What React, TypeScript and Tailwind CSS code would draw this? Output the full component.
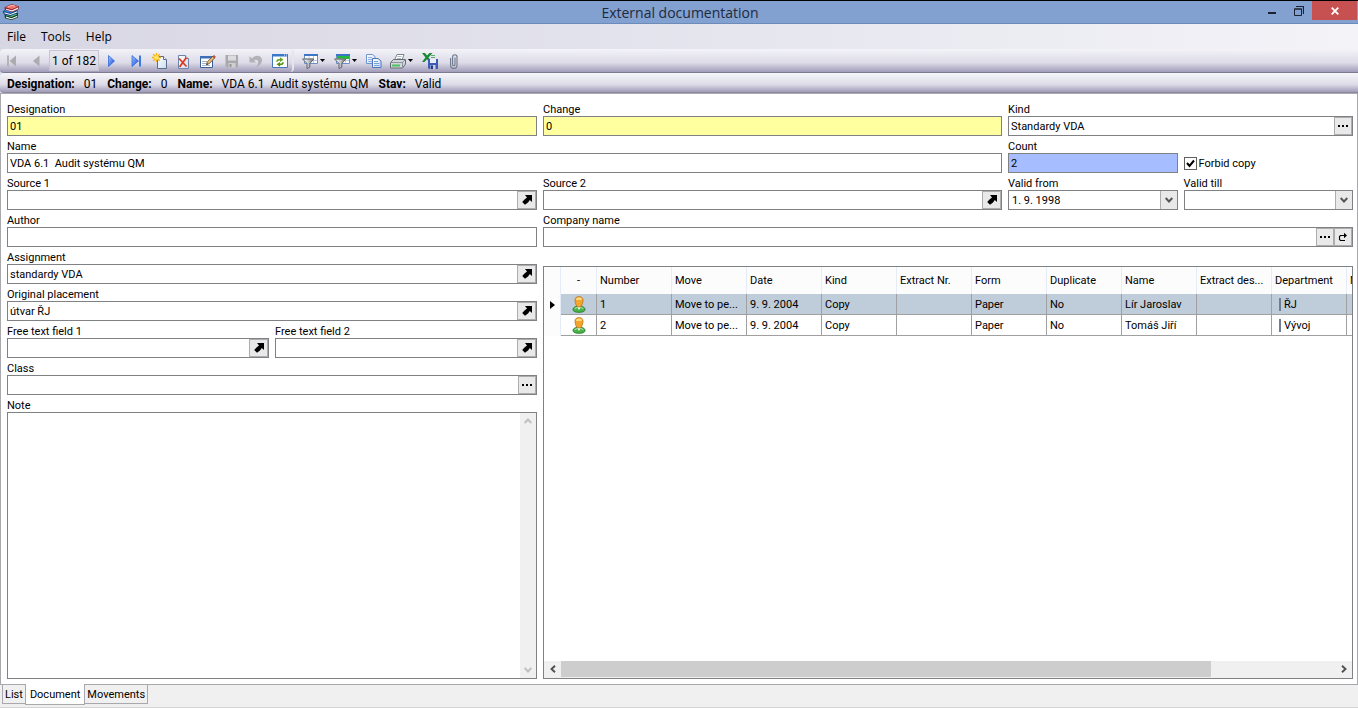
import { useState, type ReactNode } from "react";
import clsx from "clsx";

const BooksIcon = () => (
  <svg viewBox="0 0 18 18" className="h-[18px] w-[18px]">
    <path d="M2.500 12.500L5 10.500l11-.500v4.500L9.500 17l-6.500-1.800z" fill="#173a26" />
    <path d="M4 13.500l5.500 1.800 5.800-2.600v1.200l-5.800 2.400L4 14.800z" fill="#f4fbf5" />
    <path d="M3.500 12.300l6 1.700 6-2.800-4-1.200z" fill="#4fc07a" />
    <path d="M.8 8.500L3 6.500l12.500-.500v4L8.500 13 2 11.500z" fill="#123a78" />
    <path d="M2.500 9.300l6 1.700 6.500-2.700v1.200L8.500 12l-6-1.500z" fill="#eef6ff" />
    <path d="M1.500 8.300l2-1.500 11.500.4L8.500 10z" fill="#2f86dd" />
    <path d="M2.500 4.200L9.500 1l7.200 2.200v3L10 9 3 7z" fill="#8d2226" />
    <path d="M4 5.700l6 1.600 6-2.700v1.300l-6 2.500-6-1.700z" fill="#fff1f0" />
    <path d="M3.200 4.300l6.300-2.700 6.600 1.900L10 6.200z" fill="#f0706c" />
    <path d="M6 4l4-1.600 3 .8" fill="none" stroke="#ffb9b4" />
  </svg>
);

const Icon = ({ children }: { children: ReactNode }) => (
  <svg viewBox="0 0 16 16" className="h-4 w-4 shrink-0">
    <defs>
      <linearGradient id="navBlue" x1="0" y1="0" x2="1" y2="1">
        <stop offset="0" stopColor="#a4c6ff" />
        <stop offset="1" stopColor="#0b49d8" />
      </linearGradient>
      <linearGradient id="steel" x1="0" y1="0" x2="1" y2="0">
        <stop offset="0" stopColor="#ffffff" />
        <stop offset=".5" stopColor="#c9cccf" />
        <stop offset="1" stopColor="#4f555c" />
      </linearGradient>
      <linearGradient id="page" x1="0" y1="0" x2="1" y2="1">
        <stop offset="0" stopColor="#ffffff" />
        <stop offset="1" stopColor="#c9dcf2" />
      </linearGradient>
    </defs>
    {children}
  </svg>
);

const FirstIcon = () => (
  <Icon>
    <path d="M3 2.500h2v11H3z" fill="#b4b4b8" />
    <path d="M12 2.500v11L5.500 8z" fill="#acacb0" />
  </Icon>
);

const PrevIcon = () => (
  <Icon>
    <path d="M11.500 2.500v11L5 8z" fill="#acacb0" />
  </Icon>
);

const NextIcon = () => (
  <Icon>
    <path d="M4.500 2.500v11L10.500 8z" fill="url(#navBlue)" stroke="#2460d8" strokeWidth=".7" />
  </Icon>
);

const LastIcon = () => (
  <Icon>
    <path d="M4 2.500v11L10.500 8z" fill="url(#navBlue)" stroke="#2460d8" strokeWidth=".7" />
    <path d="M11 2.500h2v11h-2z" fill="#3f78e2" />
  </Icon>
);

const NewIcon = () => (
  <Icon>
    <path d="M5.500 3.500h6l3 3v9h-9z" fill="url(#page)" stroke="#5b6b88" />
    <path d="M11.500 3.500v3h3" fill="#fff" stroke="#5b6b88" />
    <path d="M4.500 0v9M0 4.500h9M1.300 1.300l6.400 6.400M7.700 1.300L1.300 7.700" stroke="#f5ae10" strokeWidth="1.300" />
    <circle cx="4.500" cy="4.500" r="2.300" fill="#ffe45c" />
  </Icon>
);

const DeleteIcon = () => (
  <Icon>
    <path d="M2.500 2.500h7l3 3v10h-10z" fill="url(#page)" stroke="#6f84a8" />
    <path d="M9.500 2.500v3h3" fill="#fff" stroke="#6f84a8" />
    <path d="M3 5.500l7.500 8M10.500 4.500L3.500 14" stroke="#e0391c" strokeWidth="1.800" />
  </Icon>
);

const EditIcon = () => (
  <Icon>
    <path d="M.5 3.500h12v11H.5z" fill="#fff" stroke="#3a5f95" />
    <path d="M0 3h13v2.500H0z" fill="#3d6fb8" />
    <path d="M2 8.500h5M2 10.500h4M2 12.500h8" stroke="#a3b4cc" />
    <path d="M6.500 11.500l.8-2.700L13 3l2 1.700-5.800 6z" fill="#e2b878" stroke="#5d3d1c" strokeWidth=".7" />
    <path d="M12.300 3.600L14 2l1.800 1.700-1.700 1.700z" fill="#b9503e" />
    <path d="M6.300 12l.6-1.800 1.400 1.100z" fill="#222" />
  </Icon>
);

const SaveIcon = () => (
  <Icon>
    <path d="M1.500 2h12.500v12.500H3L1.500 13z" fill="#a9a9ac" />
    <path d="M4 2.500h8v5H4z" fill="#dcdcde" />
    <path d="M4.500 10h7v4.500h-7z" fill="#d0d0d3" />
    <path d="M5.500 11h2v3h-2z" fill="#97979a" />
  </Icon>
);

const UndoIcon = () => (
  <Icon>
    <path d="M1.500 3v6.500H8L6 7.400c2-1.500 4.200-.7 4.200 1.500 0 2.100-1 3.600-2.700 5.600 4-1.500 6.500-4.200 6.500-7.500C14 2.800 8.200.8 4 5.400z" fill="#b2b2b6" />
  </Icon>
);

const RefreshIcon = () => (
  <Icon>
    <path d="M.5 1.500h15v13H.5z" fill="#fff" stroke="#4577bd" />
    <path d="M0 1h16v2.500H0z" fill="#3b78cc" />
    <path d="M12 1.500h1v1h-1zM14 1.500h1v1h-1z" fill="#dce9fa" />
    <path d="M5 8.700C5 7 6.200 6.400 8.500 6.600" stroke="#6aa51f" strokeWidth="1.700" fill="none" />
    <path d="M8 4.300l3.500 2.500L8 9z" fill="#6aa51f" />
    <path d="M11 9.300c0 1.700-1.200 2.300-3.500 2.100" stroke="#558f16" strokeWidth="1.700" fill="none" />
    <path d="M8 9L4.500 11.300 8 13.700z" fill="#558f16" />
  </Icon>
);

const FilterIcon = ({ green = false }: { green?: boolean }) => (
  <Icon>
    <path d="M2.500 1.500h13v9h-13z" fill="#fff" stroke="#6a8fc6" />
    <path d="M7 3v7M11.500 3v7M3 7.500h12" stroke="#b9cbe6" />
    <path d="M2 1h14v2H2z" fill="#3f76c4" />
    {green && <path d="M3 3h12v3H3z" fill="#22b83e" />}
    <path d="M.5 6h11.500L7.800 10.500v3.500L5 15.500v-5z" fill="url(#steel)" stroke="#55595f" strokeWidth=".9" />
    <path d="M1 6h10.500" stroke="#8b9096" />
  </Icon>
);

const CopyIcon = () => (
  <Icon>
    <path d="M.5 1.500h6l2.500 2v7H.5z" fill="url(#page)" stroke="#6f95cf" />
    <path d="M2 4.500h4M2 6.500h4M2 8.500h4" stroke="#8fb0e0" />
    <path d="M6.500 5.500h5.500l3 2.500v6.500H6.500z" fill="url(#page)" stroke="#4a76ba" />
    <path d="M8 8.500h4M8 10.500h5.500M8 12.500h5.500" stroke="#7ba1d9" />
  </Icon>
);

const PrintIcon = () => (
  <Icon>
    <path d="M4.500 7l2.500-5.500h7L12 7z" fill="#fff" stroke="#7b838e" />
    <path d="M7.500 3.500h4M7 5.500h4" stroke="#b0b8c2" />
    <path d="M.5 9.500l3-3h12v4.500l-3 4H.5z" fill="#d3d6da" stroke="#646c74" />
    <path d="M.5 9.500h12l3-3" fill="none" stroke="#8b939b" />
    <path d="M2 11.500h8v2H2z" fill="#4fc062" />
    <path d="M12.500 9.500V15" stroke="#8b939b" />
  </Icon>
);

const ExcelIcon = () => (
  <Icon>
    <path d="M0 0h3l2 2.500L7.500 0h3L6.500 4.500 10 9H7L5 6.200 2.500 9H0l3.400-4.500z" fill="#1c8a34" />
    <path d="M9 2.500h4M9 4.500h4" stroke="#5aaa68" />
    <path d="M6 6h10v10H7l-1-1z" fill="#3d5cb8" />
    <path d="M8 6h6v4H8z" fill="#e8eefb" />
    <path d="M8.500 12h5v4h-5z" fill="#c6cfe6" />
    <path d="M9 12.500h2V16H9z" fill="#22387e" />
  </Icon>
);

const ClipIcon = () => (
  <Icon>
    <path
      d="M9 4.500v7a1.200 1.200 0 0 1-2.400 0V4a2.200 2.200 0 0 1 4.400 0v8.200a3.200 3.200 0 0 1-6.400 0V5"
      fill="none"
      stroke="#6c7689"
      strokeWidth="1.100"
    />
  </Icon>
);

const PersonIcon = () => (
  <svg viewBox="0 0 14 17" className="mx-auto h-[17px] w-[14px]">
    <path d="M1 13.500C1 11 4 10.300 7 10.300s6 .7 6 3.200c0 2-2.500 2.800-6 2.800S1 15.500 1 13.500z" fill="#48b448" stroke="#226f24" strokeWidth=".8" />
    <path d="M2.500 13c.7-1 1.700-1.300 3-1.300M8.500 11.700c1.300 0 2.300.300 3 1.300" stroke="#c4f0bf" fill="none" />
    <path d="M5 10.500h4L7 14z" fill="#fff" />
    <path d="M3 4C3 1.800 4.700.6 7 .6S11 1.800 11 4c0 2.500-.8 4.700-1.800 6.300-1.300 1-3.100 1-4.400 0C3.800 8.700 3 6.500 3 4z" fill="#f3a52c" stroke="#b06c16" strokeWidth=".7" />
    <path d="M4 4C4 2.300 5.300 1.500 7 1.500S10 2.300 10 3.800z" fill="#ffdf86" />
  </svg>
);

const DropArrow = () => (
  <svg viewBox="0 0 5 3" className="h-[3px] w-[5px] shrink-0">
    <path d="M0 0h5L2.500 3z" fill="#000" />
  </svg>
);

const Chevron = ({ className }: { className?: string }) => (
  <svg viewBox="0 0 8 8" className={clsx("h-2 w-2", className)}>
    <path d="M.7 2L4 5.500 7.300 2" fill="none" stroke="currentColor" strokeWidth="1.900" />
  </svg>
);

const OpenIcon = () => (
  <svg viewBox="0 0 10 10" className="h-[10px] w-[10px]">
    <path d="M3 0h7v7L7.800 5 6 7.500 3 9.800.2 7 2.500 4.500 5 2.500z" fill="#000" />
  </svg>
);

const DotsIcon = () => (
  <svg viewBox="0 0 10 2" className="h-[2px] w-[10px]">
    <path d="M0 0h2v2H0zM4 0h2v2H4zM8 0h2v2H8z" fill="#000" />
  </svg>
);

const RedoIcon = () => (
  <svg viewBox="0 0 10 10" className="h-[10px] w-[10px]">
    <path d="M7 8.500H2.500l-1-1v-3l1-1H7" fill="none" stroke="#000" strokeWidth="1.100" />
    <path d="M6 .8l3 2.700-3 2.700z" fill="#000" />
  </svg>
);

const fieldIcons = {
  open: { label: "Open", icon: <OpenIcon /> },
  pick: { label: "Select", icon: <DotsIcon /> },
  go: { label: "Go to", icon: <RedoIcon /> },
};

type FieldProps = {
  id: string;
  label: string;
  value?: string;
  buttons?: (keyof typeof fieldIcons)[];
  tone?: string;
  className?: string;
};

const Field = ({ id, label, value = "", buttons = [], tone = "bg-white", className }: FieldProps) => (
  <div className={clsx("min-w-0", className)}>
    <label htmlFor={id} className="block h-[13px] leading-[13px]">
      {label}
    </label>
    <div className={clsx("flex h-5 border border-[#808184]", tone)}>
      <input id={id} defaultValue={value} className="min-w-0 flex-1 bg-transparent px-0.5 outline-none" />
      {buttons.map((name) => (
        <button
          key={name}
          aria-label={`${fieldIcons[name].label} ${label}`}
          className={clsx(
            "flex shrink-0 items-center justify-center border border-[#adadad] bg-[#e9e9e9]",
            name === "open" ? "w-[19px]" : "w-[18px]"
          )}
        >
          {fieldIcons[name].icon}
        </button>
      ))}
    </div>
  </div>
);

const DateField = ({ id, label, value = "" }: { id: string; label: string; value?: string }) => (
  <div className="min-w-0">
    <label htmlFor={id} className="block h-[13px] leading-[13px]">
      {label}
    </label>
    <div className="relative h-5 border border-[#808184] bg-white">
      <select id={id} className="block h-full w-full appearance-none bg-transparent px-[3px] outline-none">
        <option>{value}</option>
      </select>
      <span className="pointer-events-none absolute inset-y-0 right-0 flex w-[17px] items-center justify-center border-l border-[#adadad] bg-[#e9e9e9] text-[#555]">
        <Chevron />
      </span>
    </div>
  </div>
);

const ToolButton = ({ label, menu, children }: { label: string; menu?: boolean; children: ReactNode }) => (
  <button
    aria-label={label}
    className={clsx("flex h-full shrink-0 items-center", menu ? "w-8 gap-0.5 pl-1" : "w-6 justify-center")}
  >
    {children}
    {menu && <DropArrow />}
  </button>
);

const summary = [
  { label: "Designation:", value: "01" },
  { label: "Change:", value: "0" },
  { label: "Name:", value: "VDA 6.1  Audit systému QM" },
  { label: "Stav:", value: "Valid" },
];

const columns = [
  "Number",
  "Move",
  "Date",
  "Kind",
  "Extract Nr.",
  "Form",
  "Duplicate",
  "Name",
  "Extract des...",
  "Department",
  "Note",
];

const rows = [
  ["1", "Move to pe...", "9. 9. 2004", "Copy", "", "Paper", "No", "Lír Jaroslav", "", "ŘJ", ""],
  ["2", "Move to pe...", "9. 9. 2004", "Copy", "", "Paper", "No", "Tomáš Jiří", "", "Vývoj", ""],
];

const TitleBar = () => (
  <header className="flex h-6 shrink-0 border-t border-b border-t-black border-b-[#6c8bb8] bg-[#82a0d0]">
    <div className="flex flex-1 items-center pl-0.5">
      <BooksIcon />
    </div>
    <h1 className="font-['Open_Sans',sans-serif] text-[14px] leading-[23px] text-[#1e2a3c]">External documentation</h1>
    <div className="flex flex-1 justify-end">
      <button aria-label="Minimize" className="flex h-[19px] w-[26px] items-center justify-center">
        <svg viewBox="0 0 8 8" className="h-2 w-2">
          <path d="M0 5h8v2H0z" fill="#1b2330" />
        </svg>
      </button>
      <button aria-label="Restore" className="flex h-[19px] w-[27px] items-center justify-center">
        <svg viewBox="0 0 10 10" className="h-[10px] w-[10px]" fill="none" stroke="#1b2330">
          <path d="M.5 3h7v6.500h-7z" />
          <path d="M0 3h8M2 .5h7.500V8" strokeWidth="1.200" />
        </svg>
      </button>
      <button aria-label="Close" className="mr-px flex h-[19px] w-[45px] items-center justify-center bg-[#c75050]">
        <svg viewBox="0 0 8 8" className="h-2 w-2">
          <path d="M.7 .7l6.600 6.600M7.300 .7L.7 7.300" stroke="#fff" strokeWidth="1.800" />
        </svg>
      </button>
    </div>
  </header>
);

const ToolBar = () => (
  <div className="flex h-6 shrink-0 rounded-l-sm border-b border-[#7d7b92] bg-linear-to-b from-[#f3f3f8] via-[#dcdbe7] via-60% to-[#a19cb9]">
    <div className="flex items-center rounded-r-sm border-r-2 border-[#e6e5ee]">
      <ToolButton label="First record"><FirstIcon /></ToolButton>
      <ToolButton label="Previous record"><PrevIcon /></ToolButton>
      <input
        aria-label="Record position"
        defaultValue="1 of 182"
        className="mx-px h-[21px] w-[50px] border border-[#c5c4d2] bg-[#e2e1ea]/60 text-center text-[12px] outline-none"
      />
      <ToolButton label="Next record"><NextIcon /></ToolButton>
      <ToolButton label="Last record"><LastIcon /></ToolButton>
      <ToolButton label="New"><NewIcon /></ToolButton>
      <ToolButton label="Delete"><DeleteIcon /></ToolButton>
      <ToolButton label="Edit"><EditIcon /></ToolButton>
      <ToolButton label="Save"><SaveIcon /></ToolButton>
      <ToolButton label="Undo"><UndoIcon /></ToolButton>
      <ToolButton label="Refresh"><RefreshIcon /></ToolButton>
    </div>
    <div className="flex items-center pl-1">
      <ToolButton label="Filter" menu><FilterIcon /></ToolButton>
      <ToolButton label="Filter settings" menu><FilterIcon green /></ToolButton>
      <ToolButton label="Copy"><CopyIcon /></ToolButton>
      <ToolButton label="Print" menu><PrintIcon /></ToolButton>
      <ToolButton label="Export to Excel"><ExcelIcon /></ToolButton>
      <ToolButton label="Attachments"><ClipIcon /></ToolButton>
    </div>
  </div>
);

const CopiesTable = () => (
  <div className="flex min-w-0 flex-1 flex-col border border-[#808184] bg-white">
    <div className="min-h-0 flex-1 overflow-hidden">
      <table className="w-[878px] table-fixed border-separate border-spacing-0 text-left">
        <colgroup>
          <col className="w-[17px]" />
          <col className="w-9" />
          {columns.map((column) => (
            <col key={column} className="w-[75px]" />
          ))}
        </colgroup>
        <thead>
          <tr className="h-[27px] bg-[#fcfcfc]">
            <th className="border-r border-[#e3ecf7]" />
            <th className="border-r border-[#e3ecf7] text-center font-normal">-</th>
            {columns.map((column) => (
              <th key={column} className="border-r border-[#e3ecf7] px-[3px] font-normal whitespace-nowrap">
                {column}
              </th>
            ))}
          </tr>
        </thead>
        <tbody>
          {rows.map((row, i) => (
            <tr key={row[0]} className={clsx("h-[21px]", i === 0 && "bg-[#bfccd9]")}>
              <td className="border-r border-[#e3ecf7] bg-[#fcfcfc]">
                {i === 0 && (
                  <svg viewBox="0 0 5 8" className="mx-auto h-2 w-[5px]">
                    <path d="M0 0l5 4-5 4z" fill="#000" />
                  </svg>
                )}
              </td>
              <td className="border-r border-b border-[#a0a0a0]">
                <PersonIcon />
              </td>
              {row.map((cell, j) => (
                <td key={j} className="border-r border-b border-[#a0a0a0] px-[3px] whitespace-nowrap">
                  {columns[j] === "Department" ? (
                    <span className="ml-1 border-l-2 border-[#6d7f95] pl-[3px]">{cell}</span>
                  ) : (
                    cell
                  )}
                </td>
              ))}
            </tr>
          ))}
        </tbody>
      </table>
    </div>
    <div className="flex h-[17px] shrink-0 bg-[#f0f0f0] pb-px text-[#505050]">
      <button aria-label="Scroll left" className="flex w-[17px] items-center justify-center">
        <Chevron className="rotate-90" />
      </button>
      <div className="flex-1">
        <div className="h-full w-[84%] bg-[#cdcdcd]" />
      </div>
      <button aria-label="Scroll right" className="flex w-[17px] items-center justify-center">
        <Chevron className="-rotate-90" />
      </button>
    </div>
  </div>
);

const App = () => {
  const [tab, setTab] = useState("Document");
  const [forbidCopy, setForbidCopy] = useState(true);

  return (
    <div className="flex min-h-screen flex-col bg-[#f0f0f0] font-['Roboto',sans-serif] text-[11px] leading-[13px] text-black">
      <TitleBar />

      <div className="flex shrink-0 flex-col bg-linear-to-r from-[#d7d6e3] to-[#f3f3f8]">
        <nav className="flex h-[25px] items-center gap-[15px] pl-[7px] font-['Open_Sans',sans-serif] text-[12px]">
          <button>File</button>
          <button>Tools</button>
          <button>Help</button>
        </nav>
        <ToolBar />
        <div className="flex h-5 items-center gap-2.5 rounded-l-sm border-b border-[#8d8aa0] bg-linear-to-b from-[#f6f6fa] via-[#dcdbe7] via-60% to-[#a19cb9] pt-[3px] pl-[7px] text-[12px]">
          {summary.map((item) => (
            <div key={item.label} className="flex gap-[9px]">
              <b>{item.label}</b>
              <span className="whitespace-pre">{item.value}</span>
            </div>
          ))}
        </div>
      </div>

      <main className="grid flex-1 grid-cols-[530fr_459fr_345fr] grid-rows-[auto_auto_auto_auto_1fr] gap-x-1.5 gap-y-1 border border-[#a9a9ad] bg-white px-1.5 pt-[9px] pb-[5px] pr-1">
        <Field id="designation" label="Designation" value="01" tone="bg-[#ffff9f]" />
        <Field id="change" label="Change" value="0" tone="bg-[#ffff9f]" />
        <Field id="kind" label="Kind" value="Standardy VDA" buttons={["pick"]} />

        <Field id="name" label="Name" value="VDA 6.1  Audit systému QM" className="col-span-2" />
        <div className="grid grid-cols-2 gap-1.5">
          <Field id="count" label="Count" value="2" tone="bg-[#a6bdff]" />
          <label className="mb-[3px] flex h-[13px] items-center gap-[2px] self-end">
            <input
              type="checkbox"
              checked={forbidCopy}
              onChange={(e) => setForbidCopy(e.target.checked)}
              className="sr-only"
            />
            <span className="flex h-[13px] w-[13px] items-center justify-center border border-[#606060] bg-white">
              {forbidCopy && (
                <svg viewBox="0 0 9 9" className="h-[9px] w-[9px]">
                  <path d="M1 4l2.500 3L8 1.500" fill="none" stroke="#000" strokeWidth="2" />
                </svg>
              )}
            </span>
            Forbid copy
          </label>
        </div>

        <Field id="source1" label="Source 1" buttons={["open"]} />
        <Field id="source2" label="Source 2" buttons={["open"]} />
        <div className="grid grid-cols-2 gap-1.5">
          <DateField id="validFrom" label="Valid from" value="1. 9. 1998" />
          <DateField id="validTill" label="Valid till" />
        </div>

        <Field id="author" label="Author" />
        <Field id="company" label="Company name" buttons={["pick", "go"]} className="col-span-2" />

        <div className="flex flex-col gap-1">
          <Field id="assignment" label="Assignment" value="standardy VDA" buttons={["open"]} />
          <Field id="placement" label="Original placement" value="útvar ŘJ" buttons={["open"]} />
          <div className="grid grid-cols-2 gap-1.5">
            <Field id="free1" label="Free text field 1" buttons={["open"]} />
            <Field id="free2" label="Free text field 2" buttons={["open"]} />
          </div>
          <Field id="class" label="Class" buttons={["pick"]} />
          <div className="flex flex-1 flex-col">
            <label htmlFor="note" className="block h-[13px] leading-[13px]">
              Note
            </label>
            <div className="flex flex-1 border border-[#808184]">
              <textarea id="note" className="flex-1 resize-none px-0.5 outline-none" />
              <div className="flex w-4 flex-col items-center justify-between bg-[#f0f0f0] py-1 text-[#bfbfbf]">
                <Chevron className="rotate-180" />
                <Chevron />
              </div>
            </div>
          </div>
        </div>
        <div className="col-span-2 flex pt-[15px]">
          <CopiesTable />
        </div>
      </main>

      <footer className="flex h-[23px] shrink-0 items-start border-b border-[#d4d4d4] pl-0.5">
        {["List", "Document", "Movements"].map((name) => (
          <button
            key={name}
            onClick={() => setTab(name)}
            className={clsx(
              "border border-t-0 border-[#a9a9ad]",
              name === tab ? "-mx-px -mt-px h-[21px] bg-white px-1" : "h-[19px] px-0.5"
            )}
          >
            {name}
          </button>
        ))}
      </footer>
    </div>
  );
};

export default App;
